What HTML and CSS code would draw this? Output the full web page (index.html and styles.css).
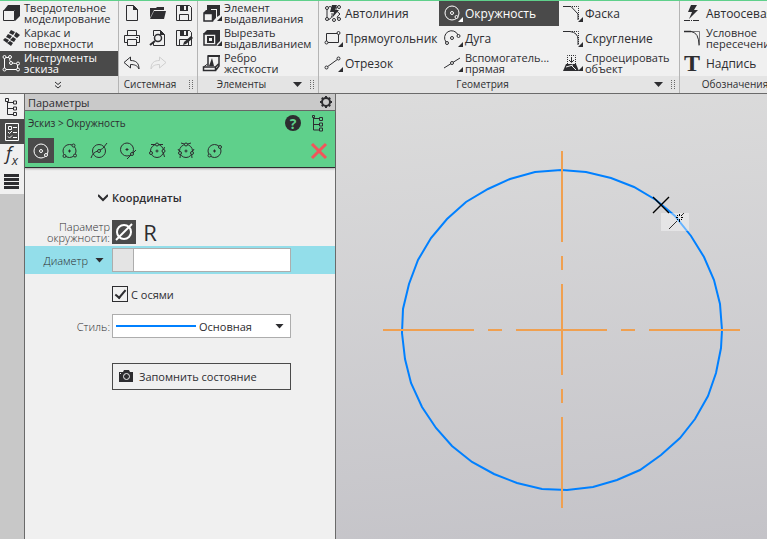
FILE: index.html
```html
<!DOCTYPE html>
<html lang="ru">
<head>
    <meta charset="UTF-8">
    <meta name="viewport" content="width=device-width, initial-scale=1.0">
    <title>Эскиз - Окружность</title>
    <link rel="stylesheet" href="styles.css">
</head>
<body>

<header class="ribbon">
    <section class="group group-modes">
        <div class="tools">
            <button type="button" class="tool double">
                <svg class="icon" viewBox="0 0 20 20"><path class="fill" d="M6 2h12v11l-5 5V7H2z"/><path d="M1.500 7.500h11v10h-11z"/></svg>
                <span>Твердотельное<br>моделирование</span>
            </button>
            <button type="button" class="tool double">
                <svg class="icon" viewBox="0 0 20 20"><path class="fill" d="M9 2l4 2-2 3-4-2zM14 4l4 3-3 3-3-2zM6 6l4 2-2 3-4-2zM11 9l3 2-2 3-4-2zM3 10l4 2-2 3-4-3zM8 13l3 2-2 3-4-3z"/></svg>
                <span>Каркас и<br>поверхности</span>
            </button>
            <button type="button" class="tool double active">
                <svg class="icon" viewBox="0 0 20 20"><path d="M2.500 4.500h5c0 5 2 6 8 6v6h-13z"/><g class="node"><circle cx="2.500" cy="4" r="1.500"/><circle cx="8" cy="4" r="1.500"/><circle cx="9" cy="10" r="1.500"/><circle cx="16" cy="10.500" r="1.500"/><circle cx="16" cy="16.500" r="1.500"/><circle cx="2.500" cy="16.500" r="1.500"/></g></svg>
                <span>Инструменты<br>эскиза</span>
            </button>
        </div>
        <footer class="group-foot">
            <button type="button" class="more" aria-label="Ещё"><svg viewBox="0 0 8 8"><path d="M1 1l3 2.500L7 1M1 4.500L4 7l3-2.500"/></svg></button>
        </footer>
    </section>

    <section class="group group-system">
        <div class="tools">
            <button type="button" class="tool" aria-label="Создать"><svg class="icon" viewBox="0 0 20 20"><path d="M4.500 2.500h7l4 4v11h-11z"/><path class="fill" d="M11 2v5h5z"/></svg></button>
            <button type="button" class="tool" aria-label="Открыть"><svg class="icon" viewBox="0 0 20 20"><path class="fill" d="M2 5h6l1-1h7v3H6l-4 8zM6 8h12l-2 8H2z"/></svg></button>
            <button type="button" class="tool" aria-label="Сохранить"><svg class="icon" viewBox="0 0 20 20"><path d="M2.500 2.500h13l2 2v13h-15z"/><path class="fill" d="M6 2h8v6H6z"/><path class="paper" d="M10 3h2v4h-2z"/><path d="M5.500 17.500v-6h9v6"/></svg></button>
            <button type="button" class="tool" aria-label="Печать"><svg class="icon" viewBox="0 0 20 20"><path d="M5.500 7.500v-5h9v5M5.500 14.500h-3v-7h15v7h-3M5.500 11.500h9v6h-9z"/><path d="M14 9.500h2"/></svg></button>
            <button type="button" class="tool" aria-label="Просмотр"><svg class="icon" viewBox="0 0 20 20"><path d="M5.500 8V2.500h7l4 4v11h-11v-3"/><path class="fill" d="M12 2v5h5z"/><circle class="medium" cx="10" cy="10" r="3.500"/><path class="bold" d="M7 13l-5 4"/></svg></button>
            <button type="button" class="tool" aria-label="Сохранить как"><svg class="icon" viewBox="0 0 20 20"><path d="M2.500 2.500h13l2 2v13h-15z"/><path class="fill" d="M6 2h8v6H6z"/><path class="paper" d="M10 3h2v4h-2z"/><path d="M5.500 17.500v-6h9v6"/><path class="fill" d="M17 8l2 2-7 6-3 1 1-3z"/></svg></button>
            <button type="button" class="tool" aria-label="Отменить"><svg class="icon" viewBox="0 0 20 20"><path d="M8.500 4L2 9.500 8.500 15v-3.500c4 0 7 1 8.500 4.500 0-6-3-8.500-8.500-8.500z"/></svg></button>
            <button type="button" class="tool" aria-label="Повторить" disabled><svg class="icon" viewBox="0 0 20 20"><path d="M11.500 4L18 9.500 11.500 15v-3.500c-4 0-7 1-8.500 4.500 0-6 3-8.500 8.500-8.500z"/></svg></button>
        </div>
        <footer class="group-foot"><span class="caption">Системная</span><i class="grip"></i></footer>
    </section>

    <section class="group group-elements">
        <div class="tools">
            <button type="button" class="tool double">
                <svg class="icon" viewBox="0 0 20 20"><path class="fill" d="M5 2h13v10l-3 2V6H9v2H5z"/><path class="fill" d="M4 7h10v8l-3 3v-8H1z"/><path class="paper" d="M9 6h6v1H9z"/><path class="medium" d="M2 10.500h8.500V18H2z"/><path class="corner" d="M20 13v5h-5z"/></svg>
                <span>Элемент<br>выдавливания</span>
            </button>
            <button type="button" class="tool double">
                <svg class="icon" viewBox="0 0 20 20"><path class="fill" d="M5 2h13v11l-4 4V6H1z"/><path class="medium" d="M2 6h12v11H2z"/><path class="bold" d="M6 9h5v5H6z"/><path class="corner" d="M20 13v5h-5z"/></svg>
                <span>Вырезать<br>выдавливанием</span>
            </button>
            <button type="button" class="tool double">
                <svg class="icon" viewBox="0 0 20 20"><path class="medium" d="M6 13V3h11v10l-3 4M1.500 14h12v3.500h-12zM13.500 14l3-3"/><path class="fill" d="M6 2h12v2H6zM10 5l2 8H7z"/><path d="M1.500 14l4-3"/></svg>
                <span>Ребро<br>жесткости</span>
            </button>
        </div>
        <footer class="group-foot"><span class="caption">Элементы</span><i class="caret"></i><i class="grip"></i></footer>
    </section>

    <section class="group group-geometry">
        <div class="tools">
            <button type="button" class="tool">
                <svg class="icon" viewBox="0 0 20 20"><path d="M4 16V6q3-5 6 0M5 17q5-2 4-7M15 3q-5 3 2 8-5 4-1 5"/><path class="fill" d="M9 2h5l-2 5h4l-7 8 2-6H7z"/><g class="node"><circle cx="4" cy="5" r="1.500"/><circle cx="4" cy="16" r="1.500"/><circle cx="11" cy="17" r="1.500"/><circle cx="16" cy="4" r="1.500"/><circle cx="16" cy="16" r="1.500"/></g></svg>
                <span>Автолиния</span>
            </button>
            <button type="button" class="tool">
                <svg class="icon" viewBox="0 0 20 20"><path d="M3.500 5.500h12v9h-12z"/><g class="node"><circle cx="3.500" cy="14.500" r="1.500"/><circle cx="15.500" cy="5" r="1.500"/></g><path class="corner" d="M20 14v5h-5z"/></svg>
                <span>Прямоугольник</span>
            </button>
            <button type="button" class="tool">
                <svg class="icon" viewBox="0 0 20 20"><path d="M4 14L15 6"/><g class="node"><circle cx="3.500" cy="14.500" r="1.500"/><circle cx="15.500" cy="5.500" r="1.500"/></g><path class="corner" d="M20 14v5h-5z"/></svg>
                <span>Отрезок</span>
            </button>
            <button type="button" class="tool active">
                <svg class="icon" viewBox="0 0 20 20"><circle cx="9" cy="10" r="7"/><circle cx="9" cy="10" r="1.500"/><circle class="nodule" cx="13.500" cy="14" r="1.500"/><path class="corner" d="M20 14v5h-5z"/></svg>
                <span>Окружность</span>
            </button>
            <button type="button" class="tool">
                <svg class="icon" viewBox="0 0 20 20"><path d="M3 14A7 7 0 1 1 15 7"/><circle cx="9" cy="10" r="1.500"/><g class="node"><circle cx="4" cy="15" r="1.500"/><circle cx="15.500" cy="8" r="1.500"/></g><path class="corner" d="M20 14v5h-5z"/></svg>
                <span>Дуга</span>
            </button>
            <button type="button" class="tool double">
                <svg class="icon" viewBox="0 0 20 20"><path d="M1 15L17 5"/><circle class="node" cx="9" cy="10" r="1.500"/><path class="corner" d="M20 14v5h-5z"/></svg>
                <span>Вспомогатель...<br>прямая</span>
            </button>
            <button type="button" class="tool">
                <svg class="icon" viewBox="0 0 20 20"><path d="M0 3.500h8L15 11v6"/><path class="dots" d="M9 3.500h6.500V16"/><path class="corner" d="M20 14v5h-5z"/></svg>
                <span>Фаска</span>
            </button>
            <button type="button" class="tool">
                <svg class="icon" viewBox="0 0 20 20"><path d="M0 3.500h7q8 1 8 8V17"/><path class="dots" d="M9 3.500h6.500V16"/><path class="corner" d="M20 14v5h-5z"/></svg>
                <span>Скругление</span>
            </button>
            <button type="button" class="tool double">
                <svg class="icon" viewBox="0 0 20 20"><path class="dots" d="M4.500 11V2.500h8V11"/><path d="M8.500 4v5M6 7l2.500 2.500L11 7"/><path class="fill" d="M3 11h10l3 7H0z"/><path class="cut" d="M3 14l7-2M8 12l5 5"/><path class="corner" d="M20 13v5h-5z"/></svg>
                <span>Спроецировать<br>объект</span>
            </button>
        </div>
        <footer class="group-foot"><span class="caption">Геометрия</span><i class="caret"></i><i class="grip"></i></footer>
    </section>

    <section class="group group-marks">
        <div class="tools">
            <button type="button" class="tool">
                <svg class="icon" viewBox="0 0 20 20"><path class="fill" d="M7 2h6l-3 5h4l-9 9 3-7H4z"/><path class="axis" d="M0 17.500h16"/></svg>
                <span>Автоосевая</span>
            </button>
            <button type="button" class="tool double">
                <svg class="icon" viewBox="0 0 20 20"><path class="medium" d="M0 3.500h7"/><path d="M7 3.500q8 1 8 14"/><path class="thin" d="M7 3.500h8.500V17"/></svg>
                <span>Условное<br>пересечение</span>
            </button>
            <button type="button" class="tool">
                <span class="letter">T</span>
                <span>Надпись</span>
            </button>
        </div>
        <footer class="group-foot"><span class="caption">Обозначения</span></footer>
    </section>
</header>

<main class="workspace">
    <nav class="rail">
        <button type="button" class="rail-item" aria-label="Дерево"><svg class="icon" viewBox="0 0 20 20"><path d="M5.500 4v13.500h6M5.500 5.500h6M5.500 11.500h6"/><g class="node"><path d="M3.500 1.500h3v3h-3zM11.500 4h3v3h-3zM11.500 10h3v3h-3zM11.500 15.500h3v3h-3z"/></g></svg></button>
        <button type="button" class="rail-item active" aria-label="Параметры"><svg class="icon" viewBox="0 0 20 20"><path d="M3.500 1.500h13v17h-13z"/><path d="M6.500 4.500h3v3h-3zM11 5.500h4M6 10l1.500 1.500L10 9M11 10.500h4M6 14.500L7.500 16l2.500-2.500M11 15.500h4"/></svg></button>
        <button type="button" class="rail-item" aria-label="Переменные"><span class="fx">f<sub>x</sub></span></button>
        <button type="button" class="rail-item" aria-label="Список"><svg class="icon" viewBox="0 0 20 20"><path class="fill" d="M2 2h15v3H2zM2 6h15v3H2zM2 10h15v3H2zM2 14h15v3H2z"/></svg></button>
    </nav>

    <aside class="panel">
        <div class="panel-title">
            <span>Параметры</span>
            <button type="button" class="plain" aria-label="Настройка"><svg class="gear" viewBox="0 0 14 14"><circle cx="7" cy="7" r="4"/><path d="M7 3V1M7 11v2M3 7H1M11 7h2M4.200 4.200L2.800 2.800M9.800 9.800l1.400 1.400M9.800 4.200l1.400-1.400M4.200 9.800l-1.400 1.400"/></svg></button>
        </div>

        <div class="command">
            <div class="command-row">
                <span class="crumbs">Эскиз &gt; Окружность</span>
                <button type="button" class="plain help" aria-label="Справка">?</button>
                <button type="button" class="plain" aria-label="Дерево построения"><svg class="icon" viewBox="0 0 20 20"><path d="M5.500 5v12h6M5.500 5.500h6M5.500 11.500h6"/><g class="node"><path d="M4.500 2.500h2v2h-2zM11.500 4.500h3v3h-3zM11.500 10h3v3h-3zM11.500 15h3v3h-3z"/></g></svg></button>
            </div>
            <div class="command-row">
                <div class="methods">
                    <button type="button" class="method active" aria-label="По центру и точке"><svg class="icon" viewBox="0 0 20 20"><circle cx="10" cy="10" r="7"/><circle cx="10" cy="10" r="1.500"/><circle class="nodule" cx="15" cy="14" r="1.500"/></svg></button>
                    <button type="button" class="method" aria-label="По трём точкам"><svg class="icon" viewBox="0 0 20 20"><circle cx="9.500" cy="10" r="6.500"/><path d="M8 10h3M9.500 8.500v3"/><g class="node"><circle cx="13.500" cy="4.500" r="1.500"/><circle cx="15" cy="14.500" r="1.500"/><circle cx="4.500" cy="15" r="1.500"/></g></svg></button>
                    <button type="button" class="method" aria-label="С центром на объекте"><svg class="icon" viewBox="0 0 20 20"><circle cx="10" cy="10" r="6.500"/><path d="M2 17q2-6 7-7t9-8"/><circle class="node" cx="10" cy="10" r="1.500"/></svg></button>
                    <button type="button" class="method" aria-label="Касательная к кривой"><svg class="icon" viewBox="0 0 20 20"><circle cx="9" cy="8.500" r="6.500"/><path d="M7.500 8.500h3M9 7v3M9 18l9-9"/><circle class="node" cx="14" cy="13" r="1.500"/></svg></button>
                    <button type="button" class="method" aria-label="Касательная к двум кривым"><svg class="icon" viewBox="0 0 20 20"><circle cx="10" cy="10" r="6.500"/><path d="M8.500 10h3M10 8.500v3M4 3.500h12M17.500 6q-3 4 0 10"/><g class="node"><circle cx="10" cy="3.500" r="1.500"/><circle cx="16.500" cy="10" r="1.500"/><circle cx="4" cy="12" r="1.500"/></g></svg></button>
                    <button type="button" class="method" aria-label="Касательная к трём кривым"><svg class="icon" viewBox="0 0 20 20"><circle cx="10" cy="10" r="6.500"/><path d="M8.500 10h3M10 8.500v3M5 2q5 3 10 0M2 8q4 4 2 9M18 8q-4 4-2 9"/><g class="node"><circle cx="10" cy="3.500" r="1.500"/><circle cx="16" cy="12" r="1.500"/><circle cx="4" cy="12" r="1.500"/></g></svg></button>
                    <button type="button" class="method" aria-label="По двум точкам"><svg class="icon" viewBox="0 0 20 20"><circle cx="9.500" cy="10" r="6.500"/><path d="M8 10h3M9.500 8.500v3"/><g class="node"><circle cx="15" cy="6" r="1.500"/><circle cx="4.500" cy="14.500" r="1.500"/></g></svg></button>
                </div>
                <button type="button" class="plain" aria-label="Закрыть"><svg class="close" viewBox="0 0 18 18"><path d="M2 2l14 14M16 2L2 16"/></svg></button>
            </div>
        </div>

        <form class="params">
            <h2 class="section-title"><svg viewBox="0 0 10 10"><path d="M0 2l5 5 5-5"/></svg>Координаты</h2>

            <div class="field">
                <span class="label">Параметр<br>окружности:</span>
                <div class="modes">
                    <button type="button" class="mode active" aria-label="Диаметр"><svg class="icon" viewBox="0 0 20 20"><circle cx="10" cy="10" r="7"/><path d="M2 18L18 2"/></svg></button>
                    <button type="button" class="mode">R</button>
                </div>
            </div>

            <div class="field current">
                <label class="label" for="diameter">Диаметр<i class="caret"></i></label>
                <div class="value"><i class="lock"></i><input type="text" id="diameter"></div>
            </div>

            <div class="field">
                <span></span>
                <label class="check"><input type="checkbox" checked>С осями</label>
            </div>

            <div class="field">
                <label class="label" for="line-style">Стиль:</label>
                <div class="picker">
                    <select id="line-style">
                        <option>Основная</option>
                        <option>Тонкая</option>
                        <option>Осевая</option>
                    </select>
                    <i class="caret"></i>
                </div>
            </div>

            <div class="field field-save">
                <span></span>
                <button type="button" class="save">
                    <svg viewBox="0 0 16 14"><path class="fill" d="M1 3h4l1-2h5l1 2h3v10H1z"/><circle class="lens" cx="8.500" cy="7.500" r="3"/><path class="lens" d="M2 4.500h1"/></svg>
                    Запомнить состояние
                </button>
            </div>
        </form>
    </aside>

    <section class="sketch">
        <svg class="drawing">
            <polygon class="circle" points="386,236 385,254 380,279 372,302 359,325 344,344 325,361 304,376 281,386 257,393 231,396 206,395 181,389 158,380 136,368 116,352 100,334 86,313 75,289 69,265 66,239 67,215 73,190 82,166 95,144 111,125 130,108 152,95 174,85 199,78 225,76 250,78 275,84 298,93 320,106 339,122 355,142 368,163 378,186 384,210"/>
            <path class="axes" d="M226 57v358M47 236h358"/>
            <rect class="hint" x="325" y="119" width="28" height="18"/>
            <path class="cross" d="M317 103l16 16M333 103l-16 16"/>
            <path class="snap" d="M333 135l8-8M345 122l3-3"/>
            <path class="spark" d="M343.500 120v2M343.500 125v3M340 123.500h2M345 123.500h2M341 121l1 1M346 121l-1 1M341 126l1-1M346 126l-1-1"/>
        </svg>
    </section>
</main>

</body>
</html>
```

FILE: styles.css
```css
* {
    box-sizing: border-box;
}
body {
    font-family: 'Open Sans', 'Noto Sans', sans-serif;
    font-size: 11px;
    line-height: 11px;
    color: #2d2d30;
    background: #c8c8c8;
    margin: 0;
    height: 100vh;
    display: flex;
    flex-direction: column;
    overflow: hidden;
}
button, input, select {
    font: inherit;
    color: inherit;
    margin: 0;
    padding: 0;
    border: 0;
    border-radius: 0;
    background: none;
}
svg {
    display: block;
    flex: none;
    fill: none;
    stroke: currentColor;
    stroke-width: 1;
}
.icon {
    width: 20px;
    height: 20px;
}
.fill, .corner {
    fill: currentColor;
    stroke: none;
}
.paper {
    fill: #f0f0f0;
    stroke: none;
}
.medium {
    stroke-width: 1.5;
}
.bold {
    stroke-width: 2;
}
.thin {
    opacity: 0.6;
}
.cut {
    stroke: #f0f0f0;
}
.node {
    fill: #f0f0f0;
}
.nodule {
    fill: #4a4a4a;
}
.dots {
    stroke-dasharray: 1 1;
}
.axis {
    stroke-dasharray: 6 1 1 1;
}
.active {
    background: #4a4a4a;
    color: #fff;
}
.active .node {
    fill: #4a4a4a;
}
.caret {
    width: 9px;
    height: 5px;
    background: #2d2d30;
    clip-path: polygon(0 0, 100% 0, 50% 100%);
}
.plain {
    display: flex;
}

/* ribbon */
.ribbon {
    display: flex;
    flex: none;
    background: #f0f0f0;
    border-top: 1px solid #5fd08b;
    border-bottom: 1px solid #6a6a6a;
}
.group {
    display: flex;
    flex-direction: column;
    flex: none;
    border-right: 1px solid #b4b4b4;
}
.tools {
    display: grid;
    grid-template-rows: repeat(3, 25px);
    grid-auto-flow: column;
}
.tool {
    display: flex;
    align-items: center;
    gap: 2px;
    padding-bottom: 1px;
    font-size: 12px;
    text-align: left;
    white-space: nowrap;
}
.tool.double {
    font-size: 11px;
}
.tool:disabled {
    color: #cfcfcf;
}
.group-foot {
    display: flex;
    align-items: center;
    gap: 8px;
    height: 17px;
    padding-right: 3px;
    background: #e4e4e4;
    font-size: 10px;
}
.caption {
    flex: 1;
    text-align: center;
}
.grip {
    width: 5px;
    height: 9px;
    background: repeating-linear-gradient(transparent 0 1px, #e4e4e4 1px 2px), repeating-linear-gradient(90deg, #6a6a6a 0 1px, transparent 1px 3px);
}
.more {
    margin: auto;
}
.more svg {
    width: 8px;
    height: 8px;
}
.group-modes {
    width: 119px;
}
.group-modes .tool {
    padding-left: 2px;
}
.group-system {
    width: 79px;
}
.group-system .tools {
    grid-template-columns: repeat(3, 26px);
    grid-auto-flow: row;
}
.group-system .tool {
    justify-content: center;
}
.group-elements {
    width: 121px;
}
.group-elements .tool {
    padding-left: 4px;
}
.group-geometry {
    width: 361px;
}
.group-geometry .tools {
    grid-template-columns: repeat(3, 120px);
}
.group-geometry .tool, .group-marks .tool {
    padding-left: 4px;
}
.group-marks {
    flex: 1 0 114px;
}
.letter {
    width: 20px;
    font-family: 'Liberation Serif', serif;
    font-size: 24px;
    font-weight: bold;
}

/* workspace */
.workspace {
    display: flex;
    flex: 1;
    min-height: 0;
}
.rail {
    flex: 0 0 24px;
}
.rail-item {
    display: flex;
    align-items: center;
    justify-content: center;
    width: 100%;
    height: 25px;
}
.rail-item:not(.active) {
    background: #f0f0f0;
}
.fx {
    font-size: 18px;
    font-style: italic;
}
.fx sub {
    font-size: 13px;
}
.panel {
    flex: 0 0 312px;
    background: #f0f0f0;
    border-left: 1px solid #6a6a6a;
    border-right: 1px solid #6a6a6a;
}
.panel-title {
    display: flex;
    align-items: center;
    justify-content: space-between;
    height: 17px;
    padding: 0 2px 0 3px;
    background: #c9c9c9;
    border-bottom: 1px solid #6a6a6a;
}
.gear {
    width: 14px;
    height: 14px;
    stroke-width: 2;
}
.command {
    display: flex;
    flex-direction: column;
    gap: 4px;
    padding: 1px 7px 4px 3px;
    background: #5fd08b;
    border-bottom: 1px solid #2d2d30;
    box-shadow: 0 1px 2px rgba(0, 0, 0, 0.3);
}
.command .icon .node {
    fill: #5fd08b;
}
.command-row {
    display: flex;
    align-items: center;
    min-height: 22px;
}
.crumbs {
    flex: 1;
    font-size: 10px;
}
.help {
    align-items: center;
    justify-content: center;
    width: 16px;
    height: 16px;
    margin-right: 7px;
    border-radius: 50%;
    background: #2d2d30;
    color: #5fd08b;
    font-size: 14px;
    font-weight: bold;
}
.methods {
    display: flex;
    flex: 1;
    gap: 3px;
}
.method {
    width: 26px;
    height: 25px;
    padding: 0 3px;
}
.close {
    width: 18px;
    height: 18px;
    stroke: #f2555a;
    stroke-width: 3;
}

/* parameters */
.params {
    display: flex;
    flex-direction: column;
}
.section-title {
    display: flex;
    align-items: center;
    gap: 4px;
    margin: 24px 0 15px 73px;
    font-size: 11px;
    font-weight: 600;
}
.section-title svg {
    width: 10px;
    height: 10px;
    stroke-width: 2;
}
.field {
    display: grid;
    grid-template-columns: 85px minmax(0, 1fr);
    gap: 2px;
    align-items: center;
    min-height: 28px;
    padding-right: 44px;
}
.label {
    text-align: right;
    font-weight: 300;
}
.label .caret {
    display: inline-block;
    margin: 0 6px 2px 7px;
}
.modes {
    display: flex;
    gap: 2px;
}
.mode {
    display: flex;
    align-items: center;
    justify-content: center;
    width: 24px;
    height: 24px;
    font-size: 22px;
}
.mode .icon {
    stroke-width: 2;
}
.current {
    background: #93deea;
}
.value {
    display: flex;
    height: 24px;
    border: 1px solid #adadad;
}
.lock {
    width: 21px;
    background: #e4e4e4;
    border-right: 1px solid #adadad;
}
.value input {
    flex: 1;
    min-width: 0;
    padding: 0 4px;
    background: #fff;
    outline: none;
}
.check {
    display: flex;
    align-items: center;
    gap: 3px;
    margin-top: 12px;
}
.check input {
    appearance: none;
    display: flex;
    align-items: center;
    justify-content: center;
    width: 16px;
    height: 16px;
    border: 1px solid #2d2d30;
}
.check input:checked::before {
    content: '';
    width: 9px;
    height: 4px;
    margin-bottom: 3px;
    border: solid #2d2d30;
    border-width: 0 0 2px 2px;
    transform: rotate(-50deg);
}
.picker {
    display: flex;
    align-items: center;
    margin: 12px 0;
    padding-right: 6px;
    border: 1px solid #adadad;
    background: #fff;
}
.picker select {
    appearance: none;
    flex: 1;
    min-width: 0;
    height: 22px;
    padding-left: 86px;
    background: linear-gradient(#0080ff, #0080ff) 3px center / 80px 2px no-repeat;
    outline: none;
}
.field-save {
    margin-top: 12px;
}
.save {
    display: flex;
    align-items: center;
    gap: 5px;
    height: 27px;
    padding: 0 5px;
    border: 1px solid #4a4a4a;
}
.save svg {
    width: 16px;
    height: 14px;
}
.lens {
    stroke: #f0f0f0;
}

/* sketch */
.sketch {
    flex: 1;
    min-width: 0;
    background: linear-gradient(175deg, #dcdcdc, #c4c3c8);
}
.drawing {
    width: 100%;
    height: 100%;
}
.circle {
    stroke: #0080ff;
    stroke-width: 2;
}
.axes {
    stroke: #f0a050;
    stroke-width: 2;
    stroke-dasharray: 91 14 14 14;
}
.hint {
    fill: rgba(255, 255, 255, 0.4);
    stroke: none;
}
.cross {
    stroke: #000;
    stroke-width: 1.4;
}
.snap {
    stroke: #333;
}
.spark {
    stroke: #000;
}
```
